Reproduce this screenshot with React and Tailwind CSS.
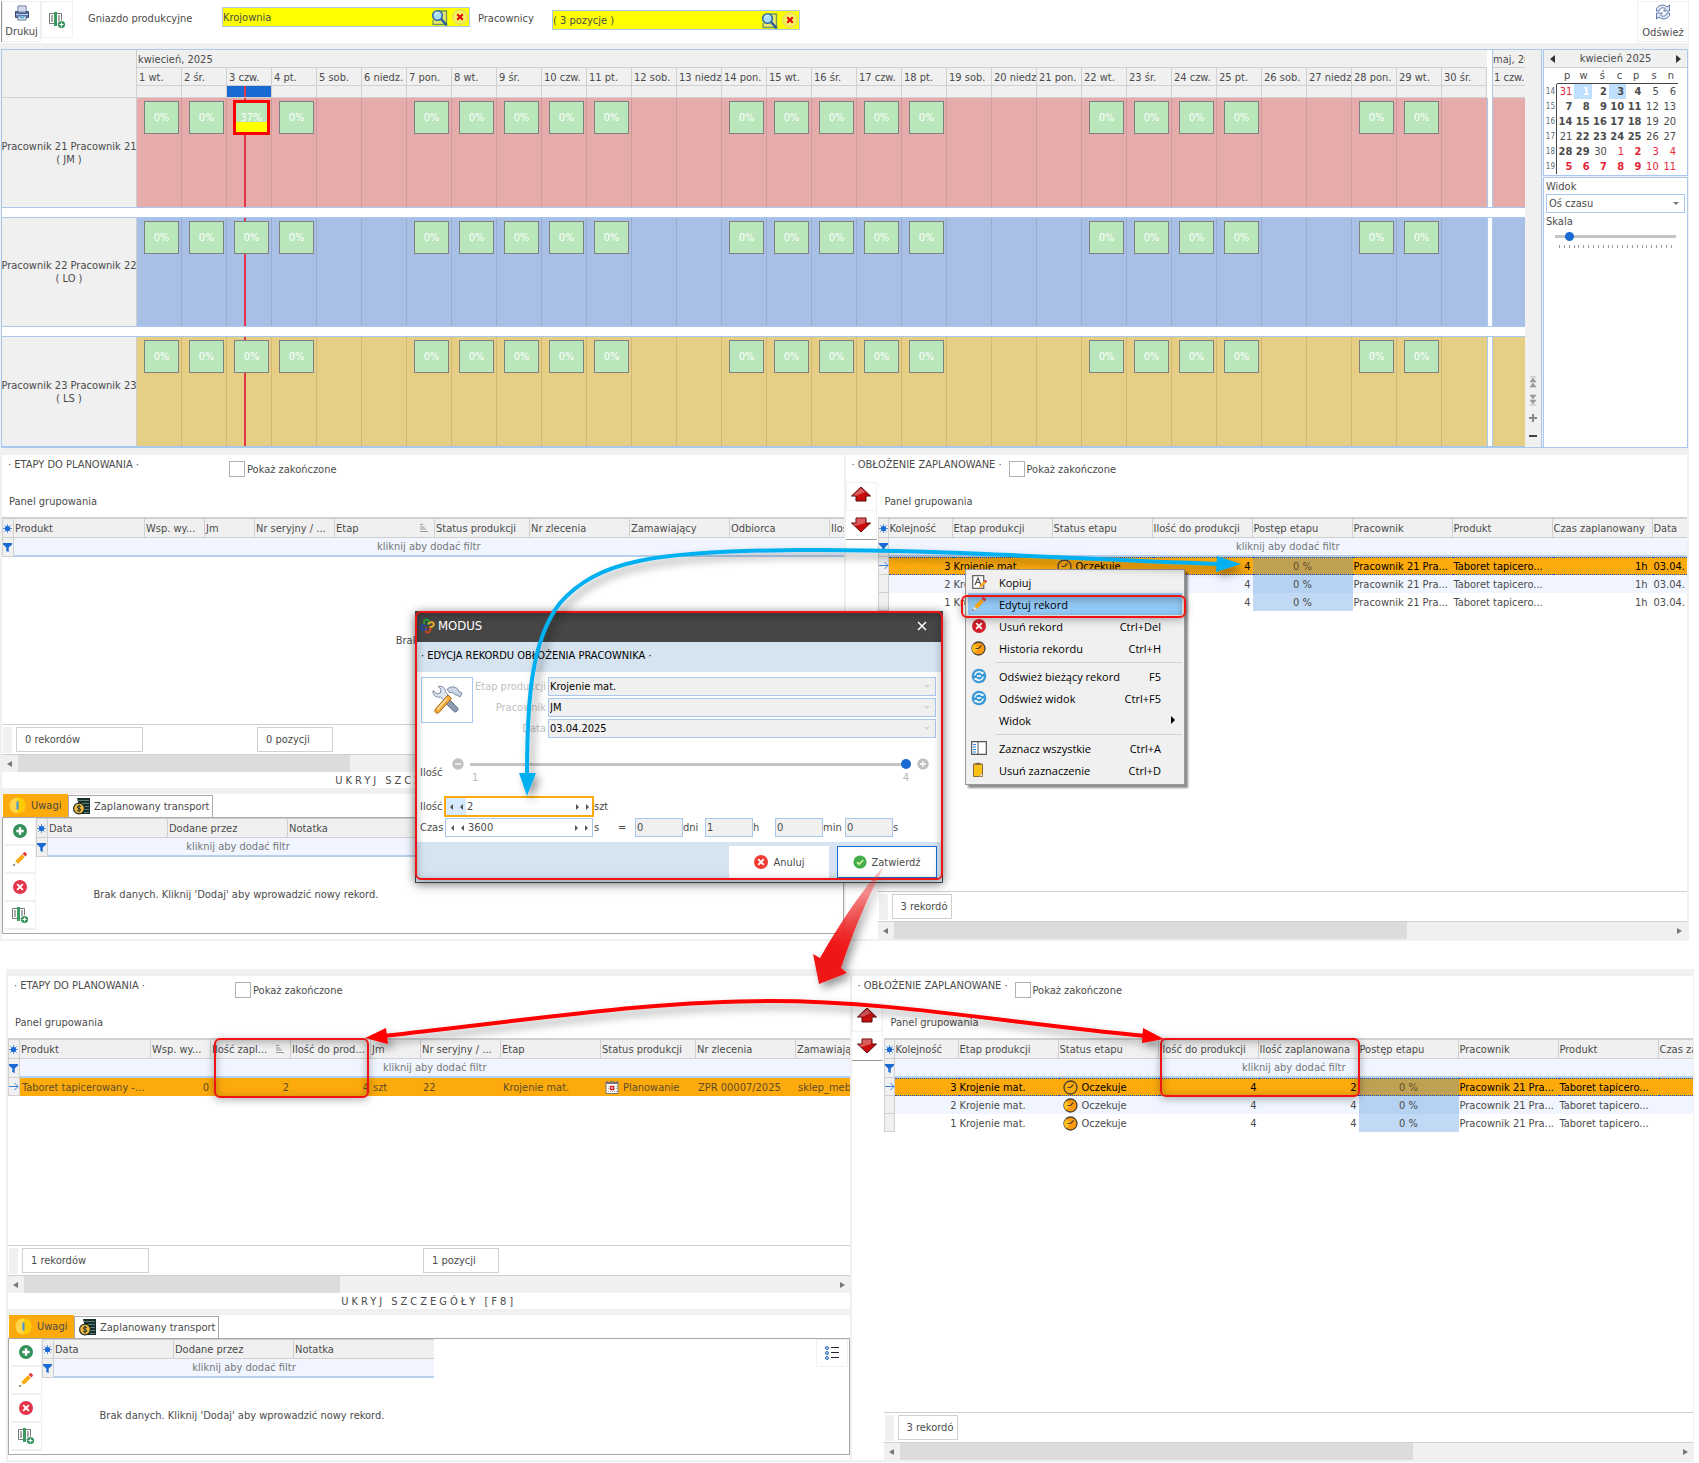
import React from 'react';

const DAY_NAMES = ['wt.', 'śr.', 'czw.', 'pt.', 'sob.', 'niedz.', 'pon.'];
const DAYS = Array.from({ length: 30 }, (_, i) => {
  const name = DAY_NAMES[i % 7];
  return { day: i + 1, label: `${i + 1} ${i + 1 > 9 && name === 'niedz.' ? 'niedz' : name}` };
});
const WORKDAYS = [1, 2, 3, 4, 7, 8, 9, 10, 11, 14, 15, 16, 17, 18, 22, 23, 24, 25, 28, 29];

const WORKERS = [
  { name: 'Pracownik 21 Pracownik 21', code: '( JM )', bg: 'bg-[#e6abab]', line: 'border-[#cf9a9a]', height: 'h-[109px]', load: 37 },
  { name: 'Pracownik 22 Pracownik 22', code: '( LO )', bg: 'bg-[#a9c0e6]', line: 'border-[#98adcf]', height: 'h-[108px]' },
  { name: 'Pracownik 23 Pracownik 23', code: '( LS )', bg: 'bg-[#e6ce85]', line: 'border-[#cfb978]', height: 'h-[109px]' },
];

// r = red (other month), b = bold (working day), s = highlighted
const WEEKS = [
  [14, '31r', '1s', '2b', '3bs', '4b', '5', '6'],
  [15, '7b', '8b', '9b', '10b', '11b', '12', '13'],
  [16, '14b', '15b', '16b', '17b', '18b', '19', '20'],
  [17, '21', '22b', '23b', '24b', '25b', '26', '27'],
  [18, '28b', '29b', '30', '1r', '2rb', '3r', '4r'],
  [19, '5rb', '6rb', '7rb', '8rb', '9rb', '10r', '11r'],
];

/* ---------- icons ---------- */

const PrinterIcon = () => (
  <svg width="16" height="16" viewBox="0 0 16 16">
    <path d="M4 1h8v6H4z" fill="#f4f7fc" stroke="#5b6f9c" />
    <path d="M5.500 3h5M5.500 5h5" stroke="#a9b8d4" />
    <path d="M1.500 6.500h2V8h9V6.500h2v6h-13z" fill="#5f7fb8" stroke="#33466f" />
    <path d="M2 9.500h12" stroke="#b8cae8" />
    <path d="M4 11h8v4H4z" fill="#fff" stroke="#5b6f9c" />
    <path d="M5.500 12.500h5" stroke="#58b0dc" strokeWidth="2" />
  </svg>
);

const ColumnsIcon = () => (
  <svg width="18" height="18" viewBox="0 0 18 18">
    <path d="M1.500 2.500h12v10h-12z" fill="#fff" stroke="#777" />
    <path d="M4 4v7M11 4v7" stroke="#aaa" strokeWidth="2" />
    <path d="M6 1h3v14H6z" fill="#3a9a60" />
    <circle cx="13.500" cy="13.500" r="4.300" fill="#fff" />
    <circle cx="13.500" cy="13.500" r="3.600" fill="#35915a" />
    <path d="M13.500 11.500v4M11.500 13.500h4" stroke="#fff" strokeWidth="1.200" />
  </svg>
);

const RefreshIcon = () => (
  <svg width="18" height="18" viewBox="0 0 18 18" fill="none">
    <path d="M2.500 8V5.500C5 1.500 10 1 13 4l2.500-2v6h-6l2-2C9.500 4 6 4.500 5 8z" fill="#dce6f5" stroke="#6278a8" />
    <path d="M15.500 10v2.500C13 16.500 8 17 5 14l-2.500 2v-6h6l-2 2c2 2 5.500 1.500 6.500-2z" fill="#dce6f5" stroke="#6278a8" />
  </svg>
);

const SearchIcon = () => (
  <svg className="block" width="17" height="17" viewBox="0 0 17 17" fill="none">
    <path d="M8 2h7.500v13.500H2V11" fill="#e9e86a" stroke="#6f9a5a" strokeWidth="1.300" />
    <circle cx="6.500" cy="6.500" r="4.800" fill="#a8dcf2" stroke="#2d6e9e" strokeWidth="1.600" />
    <path d="M4.500 5.500C5 4 6 3.600 7.500 3.600" stroke="#fff" />
    <path d="M10.500 10.500l4.500 5" stroke="#2a5f9e" strokeWidth="2.600" strokeLinecap="round" />
  </svg>
);

const ClearIcon = () => (
  <svg className="block" width="16" height="16" viewBox="0 0 16 16">
    <circle cx="8" cy="8" r="7.300" fill="#f7f25a" stroke="#d8d26a" />
    <path d="M5.200 5.200l5.600 5.600M10.800 5.200l-5.600 5.600" stroke="#e01010" strokeWidth="2.200" />
  </svg>
);

const StarIcon = () => (
  <svg className="block" width="9" height="9" viewBox="0 0 9 9">
    <circle cx="4.500" cy="4.500" r="2.600" fill="#1a6ad4" />
    <path d="M4.500 0v9M0 4.500h9M1.300 1.300l6.400 6.400M7.700 1.300L1.300 7.700" stroke="#1a6ad4" strokeWidth=".7" />
  </svg>
);

const FilterIcon = () => (
  <svg className="block" width="9" height="9" viewBox="0 0 9 9">
    <path d="M0 0h9v1.500L5.700 4.600V9L3.300 8V4.600L0 1.500z" fill="#1a6ad4" />
  </svg>
);

const RowArrowIcon = () => (
  <svg className="block" width="10" height="9" viewBox="0 0 10 9" fill="none" stroke="#3c82d8">
    <path d="M0 4.500h9M5.500 1l3.500 3.500L5.500 8" />
  </svg>
);

const SortIcon = () => (
  <svg className="block shrink-0" width="8" height="8" viewBox="0 0 8 8" stroke="#999">
    <path d="M0 .5h3M0 3h4.500M0 5h6M0 7.500h8" />
  </svg>
);

const ClockIcon = ({ flat }) => (
  <svg className="block" width="15" height="15" viewBox="0 0 15 15" fill="none">
    <circle cx="7.500" cy="7.500" r="6.500" fill={flat ? '#fcaa0c' : '#ff9a0e'} stroke="#4a4034" strokeWidth="1.300" />
    {!flat && <path d="M3 3a6 6 0 0 0 0 9l5-4.500z" fill="#ffc21f" />}
    <path d="M4.500 7.500h3L10.500 4.500" stroke="#4a4034" strokeWidth="1.200" />
  </svg>
);

const CalendarIcon = () => (
  <svg className="block" width="14" height="14" viewBox="0 0 14 14">
    <path d="M1 2h12v11.500H1z" fill="#fff" stroke="#777" />
    <path d="M1 1.500h12V4H1z" fill="#777" />
    <path d="M4 0v2M10 0v2" stroke="#fcaa0c" strokeWidth="1.500" />
    <path d="M3 6.500h9M3 8.500h9M3 11.500h9" stroke="#aaa" strokeDasharray="1 1" />
    <path d="M5.500 6.500h3v3h-3z" fill="#fff" stroke="#d81e1e" strokeWidth="1.300" />
  </svg>
);

const AddIcon = () => (
  <svg width="16" height="16" viewBox="0 0 16 16">
    <circle cx="8" cy="8" r="7" fill="#35915a" />
    <path d="M8 4.300v7.400M4.300 8h7.400" stroke="#fff" strokeWidth="2.400" />
  </svg>
);

const PencilIcon = () => (
  <svg width="16" height="16" viewBox="0 0 16 16">
    <path d="M3.300 10L10 3.300 12.700 6 6 12.700z" fill="#fca90d" />
    <path d="M10.600 2.700l1.200-1.200c.6-.6 1-.6 1.600 0l1.100 1.100c.6.6.6 1 0 1.600l-1.200 1.200z" fill="#e5383f" />
    <path d="M2.700 10.700l2.600 2.600-3.800 1.200z" fill="#f6ead8" />
    <path d="M1 13h2v2H1z" fill="#999" />
  </svg>
);

const DeleteIcon = ({ color = '#e5354a' }) => (
  <svg width="16" height="16" viewBox="0 0 16 16">
    <circle cx="8" cy="8" r="7" fill={color} />
    <path d="M5.200 5.200l5.600 5.600M10.800 5.200l-5.600 5.600" stroke="#fff" strokeWidth="1.900" />
  </svg>
);

const InfoIcon = () => (
  <svg className="shrink-0" width="17" height="17" viewBox="0 0 17 17">
    <circle cx="8.500" cy="8.500" r="8" fill="#ffd54a" />
    <path d="M8.500.5a8 8 0 0 1 0 16z" fill="#ffcb00" />
    <path d="M8.500 4.500v8" stroke="#3e92e0" strokeWidth="2" />
  </svg>
);

const MoneyIcon = () => (
  <svg className="shrink-0" width="17" height="17" viewBox="0 0 17 17">
    <path d="M4 0h13v16H8z" fill="#18302c" />
    <path d="M5 2.500h11M6 5.500h10M9 8.500h7M11 11.500h5M11 14.500h5" stroke="#5f7d74" />
    <circle cx="6" cy="10.500" r="5.400" fill="#f5b63c" stroke="#18302c" strokeWidth="1.200" />
    <path d="M7.900 8.600C7 7.600 4.300 7.700 4.300 9.200c0 1.700 3.500.9 3.500 2.600 0 1.500-2.700 1.500-3.700.4M6 6.800v7.400" fill="none" stroke="#18302c" />
  </svg>
);

const ListIcon = () => (
  <svg width="16" height="16" viewBox="0 0 16 16" fill="#a8cdf0" stroke="#3a6eb0">
    <circle cx="3" cy="3" r="1.500" />
    <circle cx="3" cy="8" r="1.500" />
    <circle cx="3" cy="13" r="1.500" />
    <path d="M7 2.500h8M7 7.500h8M7 12.500h8" stroke="#223" />
  </svg>
);

const BigArrowIcon = ({ down }) => down ? (
  <svg width="22" height="16" viewBox="0 0 22 16">
    <path d="M11 15L20.500 6H16V1H6v5H1.500z" fill="#c90d0d" stroke="#5a0808" />
    <path d="M6.500 1.500h9L15 6 5 9 3 6.500h3.500z" fill="#e07070" opacity=".8" />
  </svg>
) : (
  <svg width="22" height="16" viewBox="0 0 22 16">
    <path d="M11 1L20.500 10H16v5H6v-5H1.500z" fill="#c90d0d" stroke="#5a0808" />
    <path d="M11 2l-8 7.500h4L15 6z" fill="#e07070" opacity=".8" />
  </svg>
);

const LogoIcon = () => (
  <svg width="15" height="16" viewBox="0 0 15 16" fill="none" strokeWidth="1.800">
    <path d="M4.500 6.500C3 4 4.500 1 7 1.500S9 4.500 8 7" stroke="#2aa234" />
    <path d="M8.500 6C10 3.500 13 3.500 13.700 5.500S12 9.500 9.500 9" stroke="#f3b81e" />
    <path d="M9.500 9.500c2 2 .5 5-2 5s-2.500-3-1-5" stroke="#d6451a" />
    <path d="M6.500 10.500C4 13 1 12 1 9.500S3.500 6.500 5.500 8" stroke="#1f4fb0" />
  </svg>
);

const ToolsIcon = () => (
  <svg width="32" height="30" viewBox="0 0 32 30">
    <path d="M18 14l8.500 9c1.500 2-1.500 5-3.500 3.500L14.500 18z" fill="#8d9bb4" stroke="#56627c" />
    <path d="M2 5.500L6 9l3.500-1L10 4 7 1.500c4-1 7.500 1.500 7.500 5.500l4.500 5-4.500 4.500L9.500 12C5 13 1.500 10 2 5.500z" fill="#dfe5ee" stroke="#7c8aa5" />
    <path d="M16 4.500C19.500 1 24 1 27 4.500l1 2 3 1.500-2 4-3-2-2.500-.5c-1-2-3-2.500-4.500-1.500z" fill="#cdd6e4" stroke="#74829c" />
    <path d="M17 10l3.500 3.500L8 27.500c-2.500 2-5.500-1-3.500-3.500z" fill="#f4ab3a" stroke="#a66a1a" />
    <path d="M6.500 24.500L16 13.500" stroke="#fde0a4" strokeWidth="1.500" />
  </svg>
);

const ConfirmIcon = () => (
  <svg width="14" height="14" viewBox="0 0 16 16">
    <circle cx="8" cy="8" r="7.500" fill="#43ae4b" />
    <path d="M4.500 8.200l2.500 2.500 4.800-5" fill="none" stroke="#d6f29a" strokeWidth="2" />
  </svg>
);

const CopyIcon = () => (
  <svg width="16" height="16" viewBox="0 0 16 16" fill="none">
    <path d="M1.700 1.700h11v12.600h-11z" fill="#fff" stroke="#666" strokeWidth="1.300" />
    <path d="M4 11l3-7 3 7M5 8.500h4" stroke="#555" strokeWidth="1.200" />
    <path d="M8 12.500l5-5.500 2 1.800-4.800 4.700z" fill="#f9a51a" />
    <path d="M13 7l1-1.300L16 7.500 15 8.800z" fill="#d02020" />
  </svg>
);

const SyncIcon = () => (
  <svg width="16" height="16" viewBox="0 0 16 16" fill="none">
    <circle cx="8" cy="8" r="7.300" fill="#3c9ad8" />
    <path d="M3.800 7.500a4.300 4.300 0 0 1 7.700-2M12.200 8.500a4.300 4.300 0 0 1-7.700 2" stroke="#fff" strokeWidth="1.300" />
    <path d="M9.500 6h3V3.500zM6.500 10h-3v2.500zM6 7.200h4v1.600H6z" fill="#fff" />
  </svg>
);

const SelectAllIcon = () => (
  <svg width="16" height="16" viewBox="0 0 16 16">
    <path d="M.7 1.700h14.600v12.600H.7z" fill="#fff" stroke="#555" strokeWidth="1.200" />
    <path d="M7 2v12" stroke="#555" />
    <path d="M2 4.500h3M2 7h3M2 9.500h3M2 12h3" stroke="#2a86e0" />
  </svg>
);

const ClipboardIcon = () => (
  <svg width="14" height="16" viewBox="0 0 14 16">
    <path d="M2.500 2h9v12.500h-9z" fill="#fbc116" stroke="#8a6a3c" />
    <path d="M4.500.8h5V3h-5z" fill="#8a6a3c" />
    <path d="M8 14.500l3.500-3.500v3.500z" fill="#fff" stroke="#8a6a3c" strokeWidth=".6" />
  </svg>
);

/* ---------- top toolbar ---------- */

function LookupField({ id, value }) {
  return (
    <div className="flex h-5 w-[248px] items-center gap-1 border border-[#a8c8ee] bg-[#ffff00] pr-px">
      <input id={id} defaultValue={value} className="h-full min-w-0 flex-1 bg-transparent outline-none" />
      <button aria-label="Szukaj"><SearchIcon /></button>
      <button aria-label="Wyczyść"><ClearIcon /></button>
    </div>
  );
}

function Toolbar() {
  return (
    <header className="flex h-[43px] items-start bg-white pt-px pl-px">
      <div className="h-[41px] w-px bg-[#999]" />
      <button className="flex h-[41px] w-[39px] flex-col items-center justify-between border border-[#f0f0f0] pt-[3px] pb-[2px]">
        <PrinterIcon />
        Drukuj
      </button>
      <button aria-label="Kolumny" className="flex h-[37px] w-[32px] items-center justify-center border border-[#f0f0f0]">
        <ColumnsIcon />
      </button>
      <label htmlFor="gniazdo" className="mt-[10px] ml-[15px] w-[134px]">Gniazdo produkcyjne</label>
      <div className="mt-[6px]"><LookupField id="gniazdo" value="Krojownia" /></div>
      <label htmlFor="pracownicy" className="mt-[10px] ml-2 w-[74px]">Pracownicy</label>
      <div className="mt-[9px]"><LookupField id="pracownicy" value="( 3 pozycje )" /></div>
      <button className="ml-auto flex h-[41px] w-[52px] flex-col items-center justify-between border border-[#f0f0f0] pt-px pb-px">
        <RefreshIcon />
        Odśwież
      </button>
    </header>
  );
}

/* ---------- timeline ---------- */

function LoadBox({ load }) {
  if (load) {
    return (
      <div className="relative mt-[2px] ml-[6px] flex h-[35px] w-[37px] items-center justify-center border-3 border-[#ff0000] bg-[linear-gradient(#b9e6bb_65%,#ffff00_65%)] text-white">
        {load}%
      </div>
    );
  }
  return (
    <div className="relative mt-[3px] ml-[7px] flex h-[33px] w-[35px] items-center justify-center border border-[#808080] bg-[#b9e6bb] text-white">
      0%
    </div>
  );
}

function WorkerRow({ worker, first, last }) {
  return (
    <div className={`flex ${worker.height} box-content border-b border-[#a8c8ee] ${first ? '' : 'border-t'} ${last ? '' : 'mb-[9px]'}`}>
      <div className="flex w-[135px] shrink-0 flex-col items-center justify-center border-r border-[#d0d0d0] bg-[#f0f0f0] leading-[13px] whitespace-nowrap">
        <span>{worker.name}</span>
        <span>{worker.code}</span>
      </div>
      <div className={`grid flex-1 grid-cols-30 ${worker.bg}`}>
        {DAYS.map(({ day }) => (
          <div key={day} className={`relative ${day < 30 ? `border-r ${worker.line}` : ''}`}>
            {day === 3 && <div className="absolute inset-y-0 left-[17px] w-[2px] bg-[#e5354a]" />}
            {WORKDAYS.includes(day) && <LoadBox load={day === 3 && worker.load} />}
          </div>
        ))}
      </div>
      <div className="w-[6px] border-x border-[#a8c8ee] bg-white" />
      <div className={`w-[32px] ${worker.bg}`} />
    </div>
  );
}

function Timeline() {
  return (
    <div className="flex min-w-0 flex-1 border border-[#a8c8ee] border-b-0 bg-white">
      <div className="min-w-0 flex-1">
        <div className="flex h-12 bg-[#f0f0f0]">
          <div className="w-[135px] shrink-0 border-r border-b border-[#d0d0d0]" />
          <div className="min-w-0 flex-1">
            <div className="h-[18px] border-b border-[#d0d0d0] pl-px leading-5">kwiecień, 2025</div>
            <div className="grid h-[18px] grid-cols-30 border-b border-[#d0d0d0] leading-5">
              {DAYS.map((d) => (
                <div key={d.day} className="h-[17px] overflow-hidden border-r border-[#d0d0d0] pl-[2px] whitespace-nowrap">{d.label}</div>
              ))}
            </div>
            <div className="grid h-3 grid-cols-30 border-b border-[#d0d0d0]">
              {DAYS.map((d) => (
                <div key={d.day} className={`relative border-r border-[#d0d0d0] ${d.day === 3 ? 'bg-[#1a6ad4]' : ''}`}>
                  {d.day === 3 && <div className="absolute inset-y-0 left-[17px] w-[2px] bg-[#e5354a]" />}
                </div>
              ))}
            </div>
          </div>
          <div className="w-[6px] border-r border-[#a8c8ee] bg-white" />
          <div className="w-[32px] overflow-hidden whitespace-nowrap">
            <div className="h-[18px] border-b border-[#d0d0d0] leading-5">maj, 2025</div>
            <div className="h-[18px] border-b border-[#d0d0d0] pl-px leading-5">1 czw.</div>
            <div className="h-3 border-b border-[#d0d0d0]" />
          </div>
        </div>
        {WORKERS.map((w, i) => (
          <WorkerRow key={w.name} worker={w} first={i === 0} last={i === WORKERS.length - 1} />
        ))}
      </div>
      <div className="flex w-4 flex-col items-center justify-end gap-[6px] bg-[#f0f0f0] pb-[5px]">
        <button aria-label="Pierwszy">
          <svg className="block" width="8" height="12" viewBox="0 0 8 12"><path d="M1 1h6M4 2l3 4H1zM4 7l3 4H1z" fill="#999" stroke="#999" strokeWidth=".6" /></svg>
        </button>
        <button aria-label="Ostatni">
          <svg className="block" width="8" height="12" viewBox="0 0 8 12"><path d="M1 11h6M4 10l3-4H1zM4 5l3-4H1z" fill="#999" stroke="#999" strokeWidth=".6" /></svg>
        </button>
        <button aria-label="Powiększ">
          <svg className="block" width="8" height="12" viewBox="0 0 8 12"><path d="M0 6h8M4 2v8" stroke="#888" strokeWidth="2" /></svg>
        </button>
        <button aria-label="Pomniejsz">
          <svg className="block" width="8" height="12" viewBox="0 0 8 12"><path d="M0 6h8" stroke="#444" strokeWidth="2" /></svg>
        </button>
      </div>
    </div>
  );
}

function MiniCalendar() {
  return (
    <div className="h-[127px] border border-[#a8c8ee] bg-white">
      <div className="flex h-[18px] items-center justify-between border-b border-[#d0d0d0] bg-[#f0f0f0] px-[6px]">
        <button aria-label="Poprzedni miesiąc" className="h-0 w-0 border-y-4 border-r-[5px] border-y-transparent border-r-[#333]" />
        kwiecień 2025
        <button aria-label="Następny miesiąc" className="h-0 w-0 border-y-4 border-l-[5px] border-y-transparent border-l-[#333]" />
      </div>
      <table className="w-[134px] table-fixed border-separate border-spacing-0 text-right leading-[15px]">
        <colgroup>
          <col className="w-[13px]" />
        </colgroup>
        <thead>
          <tr className="h-4">
            <th className="p-0" />
            {['p', 'w', 'ś', 'c', 'p', 's', 'n'].map((d, i) => (
              <th key={i} className="border-b border-[#444] p-0 pr-[4px] font-normal">{d}</th>
            ))}
          </tr>
        </thead>
        <tbody>
          {WEEKS.map(([week, ...days]) => (
            <tr key={week} className="h-[15px]">
              <td className="border-r border-[#444] p-0 pr-px text-[8px] text-[#5a6f80]">{week}</td>
              {days.map((d) => {
                const red = d.includes('r') ? 'text-[#e5253a]' : '';
                const bold = d.includes('b') ? 'font-bold' : '';
                const sel = d.includes('s') ? 'bg-[#bfdfff]' : '';
                const white = d === '1s' ? 'font-bold text-white' : '';
                return <td key={d} className={`p-0 pr-[2px] ${red} ${bold} ${sel} ${white}`}>{parseInt(d, 10)}</td>;
              })}
            </tr>
          ))}
        </tbody>
      </table>
    </div>
  );
}

function ViewPanel() {
  return (
    <div className="mt-px flex-1 border border-b-0 border-[#a8c8ee] bg-white px-[2px]">
      <label htmlFor="widok" className="block h-4 leading-[17px]">Widok</label>
      <div className="relative">
        <select id="widok" className="block h-[19px] w-full appearance-none border border-[#a8c8ee] bg-white px-[2px]">
          <option>Oś czasu</option>
        </select>
        <span className="pointer-events-none absolute top-2 right-[6px] border-x-3 border-t-3 border-x-transparent border-t-[#777]" />
      </div>
      <label htmlFor="skala" className="block h-[17px] leading-[17px]">Skala</label>
      <div className="px-[9px] pt-[2px]">
        <input
          id="skala"
          type="range"
          min="0"
          max="23"
          defaultValue="2"
          className="block h-[9px] w-full appearance-none bg-[linear-gradient(#c4c4c4,#c4c4c4)] bg-[length:100%_3px] bg-center bg-no-repeat [&::-webkit-slider-thumb]:h-[9px] [&::-webkit-slider-thumb]:w-[9px] [&::-webkit-slider-thumb]:appearance-none [&::-webkit-slider-thumb]:rounded-full [&::-webkit-slider-thumb]:bg-[#1a6ad4]"
        />
        <div className="mt-1 flex justify-between px-1">
          {Array.from({ length: 24 }, (_, i) => <i key={i} className="h-[3px] w-px bg-[#999]" />)}
        </div>
      </div>
    </div>
  );
}

/* ---------- data grids ---------- */

function rowColor(index) {
  if (index === 0) return 'bg-[#fcaa0c]';
  return index % 2 ? 'bg-[#f0f5ff]' : 'bg-white';
}

function progressColor(index) {
  if (index === 0) return 'bg-[#bfa154]';
  return index % 2 ? 'bg-[#b5d2f2]' : 'bg-[#c1d9f4]';
}

function Grid({ columns, rows = [], topBorder = 'border-t-2', headHeight = 'h-[21px]', marker = 'w-3' }) {
  return (
    <table className="w-full table-fixed border-separate border-spacing-0 whitespace-nowrap">
      <colgroup>
        <col className={marker} />
        {columns.map((c) => <col key={c.title} className={c.width} />)}
      </colgroup>
      <thead>
        <tr className={headHeight}>
          <th className={`${topBorder} border-r border-b border-l border-[#d0d0d0] bg-[#f0f0f0] p-0`}><StarIcon /></th>
          {columns.map((c, i) => (
            <th
              key={c.title}
              className={`${topBorder} ${i < columns.length - 1 ? 'border-r' : ''} overflow-hidden border-b border-[#d0d0d0] bg-[#f0f0f0] p-0 pl-px text-left font-normal`}
            >
              <div className="flex items-center justify-between pr-[6px]">
                {c.title}
                {c.sorted && <SortIcon />}
              </div>
            </th>
          ))}
        </tr>
        <tr className="h-[19px]">
          <td className="border-x border-b border-[#d0d0d0] bg-[#f0f0f0] p-0"><FilterIcon /></td>
          <td colSpan={columns.length} className="border-b-2 border-[#b8d0ec] bg-[#f0f5ff] p-0 text-center text-[#777]">kliknij aby dodać filtr</td>
        </tr>
      </thead>
      <tbody>
        {rows.map((row, r) => {
          const outline = row.outlined ? 'border-y border-dotted border-[#1450c8]' : '';
          return (
            <tr key={r} className="h-[18px]">
              <td className="border-r border-b border-l border-[#d0d0d0] bg-[#f0f0f0] p-0">{r === 0 && <RowArrowIcon />}</td>
              {columns.map((c) => {
                const bg = c.progress ? progressColor(r) : rowColor(r);
                let color = '';
                if (r === 0) color = row.outlined && !c.progress ? 'text-black' : 'text-[#5f4d28]';
                return (
                  <td key={c.title} className={`overflow-hidden p-0 ${outline} ${bg} ${color} ${c.align || 'pl-[2px]'}`}>
                    {c.icon ? (
                      <span className="flex items-center gap-1 pl-[2px]">
                        {c.icon === 'clock' ? <ClockIcon flat={r === 0} /> : <CalendarIcon />}
                        {row.cells[c.title]}
                      </span>
                    ) : row.cells[c.title]}
                  </td>
                );
              })}
            </tr>
          );
        })}
      </tbody>
    </table>
  );
}

const RIGHT = 'text-right pr-[2px]';

const PLAN_COLUMNS = [
  { title: 'Produkt', width: 'w-[131px]' },
  { title: 'Wsp. wy...', width: 'w-[60px]', align: RIGHT },
  { title: 'Jm', width: 'w-[50px]' },
  { title: 'Nr seryjny / ...', width: 'w-[80px]' },
  { title: 'Etap', width: 'w-[100px]', sorted: true },
  { title: 'Status produkcji', width: 'w-[95px]' },
  { title: 'Nr zlecenia', width: 'w-[100px]' },
  { title: 'Zamawiający', width: 'w-[100px]' },
  { title: 'Odbiorca', width: 'w-[100px]' },
  { title: 'Ilość' },
];

const PLAN_COLUMNS_AFTER = [
  { title: 'Produkt', width: 'w-[131px]' },
  { title: 'Wsp. wy...', width: 'w-[60px]', align: RIGHT },
  { title: 'Ilość zapl...', width: 'w-[80px]', align: RIGHT, sorted: true },
  { title: 'Ilość do prod...', width: 'w-[80px]', align: RIGHT },
  { title: 'Jm', width: 'w-[50px]' },
  { title: 'Nr seryjny / ...', width: 'w-[80px]' },
  { title: 'Etap', width: 'w-[100px]' },
  { title: 'Status produkcji', width: 'w-[95px]', icon: 'calendar' },
  { title: 'Nr zlecenia', width: 'w-[100px]' },
  { title: 'Zamawiający' },
];

const PLAN_ROWS_AFTER = [
  {
    cells: {
      Produkt: 'Taboret tapicerowany -...',
      'Wsp. wy...': '0',
      'Ilość zapl...': '2',
      'Ilość do prod...': '4',
      Jm: 'szt',
      'Nr seryjny / ...': '22',
      Etap: 'Krojenie mat.',
      'Status produkcji': 'Planowanie',
      'Nr zlecenia': 'ZPR 00007/2025',
      Zamawiający: 'sklep_mebl',
    },
  },
];

const LOAD_HEAD = [
  { title: 'Kolejność', width: 'w-[64px]', align: RIGHT },
  { title: 'Etap produkcji', width: 'w-[100px]', align: 'pl-px' },
  { title: 'Status etapu', width: 'w-[100px]', icon: 'clock' },
  { title: 'Ilość do produkcji', width: 'w-[100px]', align: RIGHT },
];
const LOAD_TAIL = [
  { title: 'Postęp etapu', width: 'w-[100px]', align: 'text-center', progress: true },
  { title: 'Pracownik', width: 'w-[100px]', align: 'pl-px' },
  { title: 'Produkt', width: 'w-[100px]', align: 'pl-px' },
];
const LOAD_COLUMNS = [
  ...LOAD_HEAD,
  ...LOAD_TAIL,
  { title: 'Czas zaplanowany', width: 'w-[100px]', align: 'text-right pr-[5px]' },
  { title: 'Data', align: 'pl-px' },
];
const LOAD_COLUMNS_AFTER = [
  ...LOAD_HEAD,
  { title: 'Ilość zaplanowana', width: 'w-[100px]', align: RIGHT },
  ...LOAD_TAIL,
  { title: 'Czas zaplanowany' },
];

const loadRow = (order, planned, time) => ({
  outlined: order === 3,
  cells: {
    Kolejność: order,
    'Etap produkcji': 'Krojenie mat.',
    'Status etapu': 'Oczekuje',
    'Ilość do produkcji': 4,
    'Ilość zaplanowana': planned,
    'Postęp etapu': '0 %',
    Pracownik: 'Pracownik 21 Pra...',
    Produkt: 'Taboret tapicero...',
    'Czas zaplanowany': time,
    Data: '03.04.',
  },
});

const NOTE_COLUMNS = [
  { title: 'Data', width: 'w-[120px]' },
  { title: 'Dodane przez', width: 'w-[120px]' },
  { title: 'Notatka' },
];

function PanelTitle({ id, title, width }) {
  return (
    <div className="flex h-[27px] items-start pt-[2px]">
      <h2 className={`${width} pl-[6px] whitespace-nowrap`}>· {title} ·</h2>
      <input id={id} type="checkbox" className="mt-1 mr-[2px] h-4 w-4 appearance-none border border-[#b0b0b0] bg-white" />
      <label htmlFor={id} className="mt-[5px]">Pokaż zakończone</label>
    </div>
  );
}

function GridFooter({ records, width, extra, extraGap, thumb }) {
  return (
    <div>
      <div className="flex h-[31px] items-center border-y border-[#d0d0d0]">
        <div className="ml-px h-[26px] w-[9px] bg-[#f0f0f0]" />
        <div className={`ml-1 flex h-[25px] ${width} items-center overflow-hidden border border-[#d0d0d0] pl-2 whitespace-nowrap`}>{records}</div>
        {extra && <div className={`${extraGap} flex h-[25px] w-[76px] items-center border border-[#d0d0d0] pl-2`}>{extra}</div>}
      </div>
      <div className="flex h-[17px] items-center bg-[#f0f0f0] px-[5px]">
        <button aria-label="W lewo" className="h-0 w-0 border-y-3 border-r-[5px] border-y-transparent border-r-[#777]" />
        <div className="mx-[6px] h-full flex-1"><div className={`h-full ${thumb} bg-[#dcdcdc]`} /></div>
        <button aria-label="W prawo" className="h-0 w-0 border-y-3 border-l-[5px] border-y-transparent border-l-[#777]" />
      </div>
    </div>
  );
}

function SideButton({ label, children }) {
  return (
    <button aria-label={label} className="flex h-7 w-full items-center justify-center border-r border-b-2 border-[#f0f0f0] bg-white">
      {children}
    </button>
  );
}

function NotesPanel({ withList }) {
  return (
    <div>
      <div className="flex h-[23px] items-end pl-px" role="tablist">
        <button role="tab" aria-selected="true" className="flex h-[23px] w-[65px] items-center gap-[5px] bg-[#fcaa0c] pl-[6px]">
          <InfoIcon /> Uwagi
        </button>
        <button role="tab" aria-selected="false" className="flex h-[22px] w-[145px] items-center gap-1 border border-b-0 border-[#a8a8a8] bg-white pl-1 whitespace-nowrap">
          <MoneyIcon /> Zaplanowany transport
        </button>
      </div>
      <div className="flex h-[117px] items-start border border-[#a8a8a8] pl-[2px]">
        <div className="w-[31px]">
          <SideButton label="Dodaj"><AddIcon /></SideButton>
          <SideButton label="Edytuj"><PencilIcon /></SideButton>
          <SideButton label="Usuń"><DeleteIcon /></SideButton>
          <SideButton label="Kolumny"><ColumnsIcon /></SideButton>
        </div>
        <div className="w-[392px]">
          <Grid columns={NOTE_COLUMNS} topBorder="border-t" headHeight="h-5" />
          <p className="pt-[30px] pl-2 text-center">Brak danych. Kliknij 'Dodaj' aby wprowadzić nowy rekord.</p>
        </div>
        {withList && (
          <button aria-label="Lista" className="mr-px ml-auto flex h-7 w-8 items-center justify-center border border-[#f0f0f0]">
            <ListIcon />
          </button>
        )}
      </div>
    </div>
  );
}

function PlanPanel({ id, columns, rows, footer, withList, empty }) {
  return (
    <section className="min-w-0 flex-1 overflow-hidden bg-white">
      <PanelTitle id={id} title="ETAPY DO PLANOWANIA" width="w-[227px]" />
      <div className="flex h-[35px] items-center pt-[3px] pl-[7px]">Panel grupowania</div>
      <div className="h-[207px]">
        <Grid columns={columns} rows={rows} />
        {empty && <p className="pt-[76px] pl-2 text-center">Brak danych</p>}
      </div>
      <GridFooter {...footer} />
      <button className="block h-4 w-full leading-[18px] tracking-[3px]">UKRYJ SZCZEGÓŁY [F8]</button>
      <div className="h-[6px] bg-[#f0f0f0]" />
      <NotesPanel withList={withList} />
      <div className="h-[5px]" />
    </section>
  );
}

function LoadPanel({ id, columns, rows }) {
  return (
    <section className="flex min-w-0 flex-1 flex-col overflow-hidden bg-white">
      <PanelTitle id={id} title="OBŁOŻENIE ZAPLANOWANE" width="w-[163px]" />
      <div className="flex flex-1">
        <div className="w-8 shrink-0">
          <button aria-label="W górę" className="flex h-[29px] w-[31px] items-center justify-center border border-[#f0f0f0] pb-[6px]"><BigArrowIcon /></button>
          <button aria-label="W dół" className="flex h-[29px] w-[31px] items-center justify-center border-r border-b border-r-[#f0f0f0] border-b-[#999] pb-px"><BigArrowIcon down /></button>
        </div>
        <div className="flex min-w-0 flex-1 flex-col">
          <div className="flex h-[35px] items-center pt-[3px] pl-[7px]">Panel grupowania</div>
          <div className="flex-1"><Grid columns={columns} rows={rows} marker="w-[11px]" /></div>
          <GridFooter records="3 rekordó" width="w-[60px]" thumb="w-[66%]" />
        </div>
      </div>
    </section>
  );
}

/* ---------- dialog and context menu ---------- */

function ReadonlyField({ id, label, value }) {
  return (
    <>
      <label htmlFor={id} className="text-right whitespace-nowrap text-[#c0c0c0]">{label}</label>
      <div className="relative">
        <select id={id} disabled className="block h-[19px] w-full appearance-none border border-[#a8c8ee] bg-[#f0f0f0] px-px text-black opacity-100">
          <option>{value}</option>
        </select>
        <span className="absolute top-2 right-[6px] border-x-3 border-t-3 border-x-transparent border-t-[#d4d4d4]" />
      </div>
    </>
  );
}

function Spinner({ id, value, focused }) {
  const frame = focused ? 'border-2 border-[#fcaa0c] h-[21px] w-[150px]' : 'border border-[#a8c8ee] h-[19px] w-[148px] mx-px px-px';
  const step = 'flex h-full w-[10px] items-center justify-center';
  const left = <i className="border-y-3 border-r-3 border-y-transparent border-r-[#555]" />;
  const right = <i className="border-y-3 border-l-3 border-y-transparent border-l-[#555]" />;
  return (
    <div className={`flex items-center bg-white ${frame}`}>
      <button aria-label="Minimum" className={`${step} ${focused ? 'bg-[#d8eaff]' : ''}`}>{left}</button>
      <button aria-label="Mniej" className={`${step} ${focused ? 'bg-[#d8eaff]' : ''}`}>{left}</button>
      <input id={id} defaultValue={value} className="h-full min-w-0 flex-1 bg-transparent pl-px outline-none" />
      <button aria-label="Więcej" className={step}>{right}</button>
      <button aria-label="Maksimum" className={step}>{right}</button>
    </div>
  );
}

function TimePart({ unit, value }) {
  return (
    <label className="flex w-[70px] items-center">
      <input readOnly value={value} className="h-[19px] w-12 border border-[#a8c8ee] bg-[#f0f0f0] px-px outline-none" />
      {unit}
    </label>
  );
}

function CircleButton({ label, glyph }) {
  return (
    <button aria-label={label}>
      <svg className="block" width="12" height="12" viewBox="0 0 12 12">
        <circle cx="6" cy="6" r="5.700" fill="#c0c0c0" />
        <path d={glyph} stroke="#fff" strokeWidth="1.300" />
      </svg>
    </button>
  );
}

function EditDialog() {
  return (
    <div role="dialog" aria-label="MODUS" className="absolute top-[611px] left-[415px] w-[528px] border border-[#464646] bg-white shadow-[0_2px_10px_rgba(0,0,0,0.35)]">
      <div className="flex h-[30px] items-center bg-[#464646] px-1 pb-[3px] text-[13px] text-white">
        <LogoIcon />
        <span className="ml-[3px] flex-1">MODUS</span>
        <button aria-label="Zamknij" className="mr-[11px]">
          <svg width="10" height="10" viewBox="0 0 10 10"><path d="M1 1l8 8M9 1L1 9" stroke="#fff" strokeWidth="1.500" /></svg>
        </button>
      </div>
      <div className="flex h-[30px] items-center bg-[#d6e4f2] pb-1 pl-[5px] text-black">· EDYCJA REKORDU OBŁOŻENIA PRACOWNIKA ·</div>
      <div className="flex gap-[2px] pt-[5px] pr-[6px] pl-[5px]">
        <div className="flex h-[46px] w-[52px] items-center justify-center border border-[#a8c8ee]"><ToolsIcon /></div>
        <div className="grid flex-1 grid-cols-[71px_1fr] items-center gap-x-[2px] gap-y-[2px]">
          <ReadonlyField id="etap" label="Etap produkcji" value="Krojenie mat." />
          <ReadonlyField id="pracownik" label="Pracownik" value="JM" />
          <ReadonlyField id="data" label="Data" value="03.04.2025" />
        </div>
      </div>
      <div className="flex h-[58px] items-start pt-5 pl-1">
        <label htmlFor="ilosc-slider" className="mt-[7px] w-8">Ilość</label>
        <div className="flex-1">
          <div className="flex items-center gap-[6px]">
            <CircleButton label="Mniej" glyph="M3 6h6" />
            <input
              id="ilosc-slider"
              type="range"
              min="1"
              max="4"
              defaultValue="4"
              className="block h-[10px] w-[441px] appearance-none bg-[linear-gradient(#c4c4c4,#c4c4c4)] bg-[length:100%_3px] bg-center bg-no-repeat [&::-webkit-slider-thumb]:h-[10px] [&::-webkit-slider-thumb]:w-[10px] [&::-webkit-slider-thumb]:appearance-none [&::-webkit-slider-thumb]:rounded-full [&::-webkit-slider-thumb]:bg-[#1a6ad4]"
            />
            <CircleButton label="Więcej" glyph="M3 6h6M6 3v6" />
          </div>
          <div className="mr-[33px] ml-[20px] flex justify-between text-[#b8b8b8]"><span>1</span><span>4</span></div>
        </div>
      </div>
      <div className="pl-1">
        <div className="flex items-center">
          <label htmlFor="ilosc" className="w-6">Ilość</label>
          <Spinner id="ilosc" value="2" focused />
          szt
        </div>
        <div className="mt-px flex items-center">
          <label htmlFor="czas" className="w-6 whitespace-nowrap">Czas</label>
          <Spinner id="czas" value="3600" />
          <span className="w-6">s</span>
          <span className="w-[17px]">=</span>
          <TimePart unit="dni" value="0" />
          <TimePart unit="h" value="1" />
          <TimePart unit="min" value="0" />
          <TimePart unit="s" value="0" />
        </div>
      </div>
      <div className="mt-[5px] flex h-10 justify-end gap-2 bg-[#d6e4f2] pt-1 pr-[5px]">
        <button className="flex h-8 w-[100px] items-center justify-center gap-1 bg-white"><DeleteIcon color="#f03c32" /> Anuluj</button>
        <button className="flex h-8 w-[100px] items-center justify-center gap-1 border border-[#1a6ad4] bg-white"><ConfirmIcon /> Zatwierdź</button>
      </div>
    </div>
  );
}

const MENU = [
  { label: 'Kopiuj', icon: <CopyIcon /> },
  { label: 'Edytuj rekord', icon: <PencilIcon />, active: true },
  { label: 'Usuń rekord', icon: <DeleteIcon color="#d3202a" />, keys: 'Ctrl+Del' },
  { label: 'Historia rekordu', icon: <ClockIcon />, keys: 'Ctrl+H' },
  null,
  { label: 'Odśwież bieżący rekord', icon: <SyncIcon />, keys: 'F5' },
  { label: 'Odśwież widok', icon: <SyncIcon />, keys: 'Ctrl+F5' },
  { label: 'Widok', submenu: true },
  null,
  { label: 'Zaznacz wszystkie', icon: <SelectAllIcon />, keys: 'Ctrl+A' },
  { label: 'Usuń zaznaczenie', icon: <ClipboardIcon />, keys: 'Ctrl+D' },
];

function ContextMenu() {
  return (
    <div role="menu" className="absolute top-[569px] left-[965px] w-[220px] border border-[#999] bg-[#f0f0f0] px-[2px] pt-px pb-[3px] font-['Open_Sans',sans-serif] text-black shadow-[3px_3px_2px_rgba(0,0,0,0.45)]">
      {MENU.map((item, i) => item === null ? (
        <div key={i} className="flex h-[6px] items-center pl-7"><div className="h-px w-full bg-[#d0d0d0]" /></div>
      ) : (
        <button key={i} role="menuitem" className={`flex h-[22px] w-full items-center ${item.active ? 'bg-[#92c9f7]' : ''}`}>
          <span className="flex w-[31px] items-center pl-[3px]">{item.icon}</span>
          <span className="flex-1 text-left">{item.label}</span>
          {item.keys && <span className="pr-[21px]">{item.keys}</span>}
          {item.submenu && <i className="mr-[7px] border-y-4 border-l-4 border-y-transparent border-l-black" />}
        </button>
      ))}
    </div>
  );
}

/* Callout frames and arrows drawn over the windows */
function Annotations() {
  const frame = 'absolute rounded-[6px] border-2 border-[#f01414] shadow-[0_2px_8px_rgba(0,0,0,0.3),inset_0_2px_8px_rgba(0,0,0,0.3)]';
  return (
    <div className="pointer-events-none absolute inset-0 overflow-hidden">
      <div className={`${frame} top-[611px] left-[415px] h-[269px] w-[528px]`} />
      <div className={`${frame} top-[595px] left-[961px] h-[23px] w-[225px]`} />
      <div className={`${frame} top-[1038px] left-[214px] h-[60px] w-[155px]`} />
      <div className={`${frame} top-[1038px] left-[1160px] h-[59px] w-[200px]`} />
      <svg className="absolute top-0 left-0" width="1699" height="1463" viewBox="0 0 1699 1463" fill="none">
        <defs>
          <filter id="soft" x="-20%" y="-20%" width="140%" height="150%">
            <feDropShadow dx="4" dy="5" stdDeviation="4" floodOpacity=".4" />
          </filter>
          <linearGradient id="fade" x1="883" y1="866" x2="825" y2="975" gradientUnits="userSpaceOnUse">
            <stop offset="0" stopColor="#f01818" stopOpacity=".2" />
            <stop offset=".75" stopColor="#f01818" />
          </linearGradient>
        </defs>
        <g filter="url(#soft)">
          <path d="M527 778C527 700 531 640 560 603C598 560 655 551 800 550C920 549 1050 558 1220 564" stroke="#00b0f0" strokeWidth="4" />
          <path d="M519 773h17l-9 23zM1217 556l24 8-25 8z" fill="#00b0f0" />
        </g>
        <g filter="url(#soft)">
          <path d="M383 1036C560 1016 660 1001 770 1001C890 1001 1000 1022 1146 1036" stroke="#ff0000" strokeWidth="4" />
          <path d="M386 1028l2 16-23-6zM1143 1028l21 11-22 4z" fill="#ff0000" />
        </g>
        <path d="M884 866C862 890 842 920 820 958L813 954L819 984L847 973L841 968C852 935 864 905 884 866z" fill="url(#fade)" filter="url(#soft)" />
      </svg>
    </div>
  );
}

export default function App() {
  return (
    <main className="relative overflow-hidden bg-white font-['DejaVu_Sans_Condensed','DejaVu_Sans',sans-serif] text-[11px] leading-[15px] text-[#4b4b4b]">
      <div className="mr-[10px] bg-[#f0f0f0]">
        <Toolbar />
        <div className="mt-[6px] mr-px ml-px flex gap-px">
          <Timeline />
          <aside className="flex w-[145px] flex-col">
            <MiniCalendar />
            <ViewPanel />
          </aside>
        </div>
        <div className="mx-px h-px bg-[#a8c8ee]" />
        <div className="mt-[7px] flex gap-[2px] pr-[2px] pb-[2px] pl-[2px]">
          <PlanPanel
            id="plan-before"
            columns={PLAN_COLUMNS}
            empty
            footer={{ records: '0 rekordów', width: 'w-[127px]', extra: '0 pozycji', extraGap: 'ml-[114px]', thumb: 'w-[41%]' }}
          />
          <LoadPanel id="load-before" columns={LOAD_COLUMNS} rows={[loadRow(3, 4, '1h'), loadRow(2, 4, '1h'), loadRow(1, 4, '1h')]} />
        </div>
      </div>

      <div className="mt-7 mr-[5px] ml-[6px] flex gap-[2px] bg-[#f0f0f0] pt-[7px] pr-px pb-[2px] pl-[2px]">
        <PlanPanel
          id="plan-after"
          columns={PLAN_COLUMNS_AFTER}
          rows={PLAN_ROWS_AFTER}
          withList
          footer={{ records: '1 rekordów', width: 'w-[127px]', extra: '1 pozycji', extraGap: 'ml-[274px]', thumb: 'w-[39%]' }}
        />
        <LoadPanel id="load-after" columns={LOAD_COLUMNS_AFTER} rows={[loadRow(3, 2), loadRow(2, 4), loadRow(1, 4)]} />
      </div>

      <ContextMenu />
      <EditDialog />
      <Annotations />
    </main>
  );
}
